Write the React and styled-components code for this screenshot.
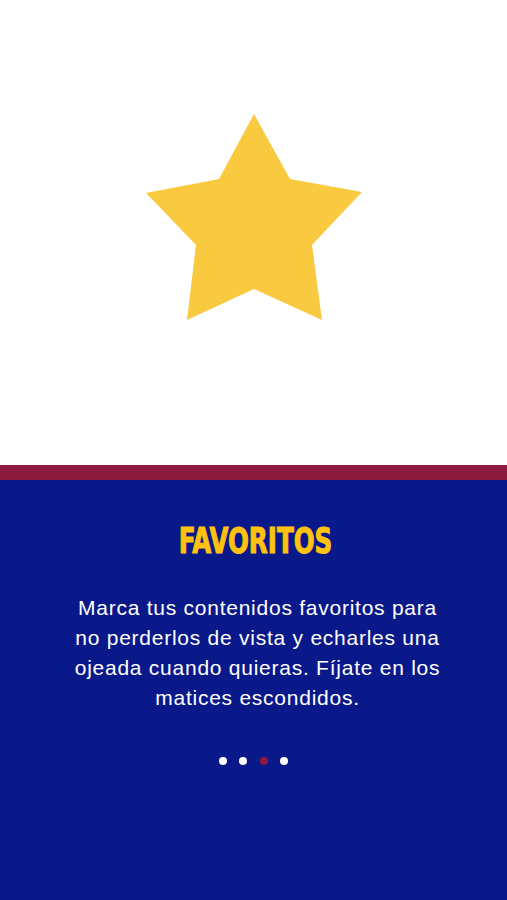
import React from 'react';
import styled, { createGlobalStyle } from 'styled-components';

const GlobalStyle = createGlobalStyle`
  html, body {
    margin: 0;
    padding: 0;
    height: 100%;
  }
  body {
    font-family: "Liberation Sans", Arial, sans-serif;
    background: #ffffff;
  }
`;

const Screen = styled.div`
  width: 507px;
  height: 900px;
  display: flex;
  flex-direction: column;
  overflow: hidden;
`;

const Hero = styled.section`
  height: 465px;
  background: #ffffff;
  display: flex;
  justify-content: center;
  padding-top: 114px;
  box-sizing: border-box;
`;

const Stripe = styled.div`
  height: 15px;
  background: #8c1a3e;
`;

const Panel = styled.section`
  flex: 1;
  background: #0a198a;
  display: flex;
  flex-direction: column;
  align-items: center;
  padding-top: 44px;
`;

const Title = styled.h1`
  margin: 0 0 0 4px;
  font-family: "DejaVu Sans Condensed", "Liberation Sans", sans-serif;
  font-weight: 700;
  font-size: 35px;
  line-height: 34px;
  color: #ffc20f;
  -webkit-text-stroke: 1px #ffc20f;
  transform: scaleX(0.78);
`;

const Text = styled.p`
  margin: 35px 0 0;
  padding-left: 8px;
  text-align: center;
  color: #ffffff;
  font-size: 21px;
  letter-spacing: 0.75px;
  line-height: 30px;
`;

const Dots = styled.div`
  display: flex;
  gap: 12.5px;
  margin-top: 44px;
`;

const Dot = styled.span`
  width: 8px;
  height: 8px;
  border-radius: 50%;
  background: ${(p) => (p.$active ? '#8c1a3e' : '#ffffff')};
`;

const Star = () => (
  <svg width="216" height="207" viewBox="146 114 216 207">
    <polygon
      points="254,114 290,179 362,192 312,245 322,320 254,289 187,320 196,245 146,193 219,179"
      fill="#f9c940"
    />
  </svg>
);

export default function App() {
  return (
    <>
      <GlobalStyle />
      <Screen>
        <Hero>
          <Star />
        </Hero>
        <Stripe />
        <Panel>
          <Title>FAVORITOS</Title>
          <Text>
            Marca tus contenidos favoritos para<br />
            no perderlos de vista y echarles una<br />
            ojeada cuando quieras. Fíjate en los<br />
            matices escondidos.
          </Text>
          <Dots>
            <Dot />
            <Dot />
            <Dot $active />
            <Dot />
          </Dots>
        </Panel>
      </Screen>
    </>
  );
}
